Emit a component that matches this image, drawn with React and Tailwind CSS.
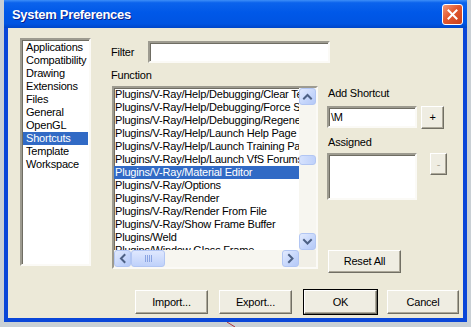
import React from "react";

const functions = [
  "Plugins/V-Ray/Help/Debugging/Clear Texture Cache",
  "Plugins/V-Ray/Help/Debugging/Force Scene Update",
  "Plugins/V-Ray/Help/Debugging/Regenerate Materials",
  "Plugins/V-Ray/Help/Launch Help Page",
  "Plugins/V-Ray/Help/Launch Training Page",
  "Plugins/V-Ray/Help/Launch VfS Forums",
  "Plugins/V-Ray/Material Editor",
  "Plugins/V-Ray/Options",
  "Plugins/V-Ray/Render",
  "Plugins/V-Ray/Render From File",
  "Plugins/V-Ray/Show Frame Buffer",
  "Plugins/Weld",
  "Plugins/Window Glass Frame",
];

const categories = [
  "Applications",
  "Compatibility",
  "Drawing",
  "Extensions",
  "Files",
  "General",
  "OpenGL",
  "Shortcuts",
  "Template",
  "Workspace",
];

const sunken =
  "border-2 border-t-[#9d9b90] border-l-[#9d9b90] border-b-[#fbfaf6] border-r-[#fbfaf6] shadow-[inset_1px_1px_0_#6f6d63] bg-white";

const raised =
  "border border-t-white border-l-white border-b-[#716f64] border-r-[#716f64] shadow-[inset_-1px_-1px_0_#aca899] bg-[#efede2]";

function Chevron({ dir }) {
  const paths = {
    up: "M4 9.5 L7.5 6 L11 9.5",
    down: "M4 6 L7.5 9.5 L11 6",
    left: "M9.5 4 L6 7.5 L9.5 11",
    right: "M6 4 L9.5 7.5 L6 11",
  };
  return (
    <svg width="15" height="15" viewBox="0 0 15 15">
      <path d={paths[dir]} fill="none" stroke="#4d6185" strokeWidth="2" strokeLinecap="square" />
    </svg>
  );
}

function ScrollBtn({ dir }) {
  return (
    <div className="w-[17px] h-[17px] shrink-0 flex items-center justify-center rounded-[3px] border border-[#b2c6f3] bg-[linear-gradient(135deg,#e3ebfe,#c4d5fb_60%,#b5c9f7)]">
      <Chevron dir={dir} />
    </div>
  );
}

function Button({ children, w = "w-[73px]", h = "h-[24px]", disabled = false }) {
  return (
    <div
      className={`${w} ${h} ${raised} flex items-center justify-center ${
        disabled ? "text-[#aca899]" : "text-black"
      }`}
    >
      {children}
    </div>
  );
}

export default function App() {
  return (
    <div
      className="w-[471px] h-[327px] bg-[#c9d0d5] overflow-hidden text-[11px] leading-[13px] tracking-[-0.2px] text-black"
      style={{ fontFamily: '"Liberation Sans", Arial, sans-serif' }}
    >
      <div className="ml-[4px] w-[463px] h-[322px] flex flex-col bg-[#0a46d8]">
        {/* Title bar */}
        <div className="h-[28px] shrink-0 flex items-center justify-between pl-[8px] pr-[4px] pt-[1px] bg-[linear-gradient(to_bottom,#3d8ef8_0%,#0b63ec_10%,#0058e8_45%,#0054e2_85%,#0046c8_100%)]">
          <span className="text-white font-bold text-[13px] tracking-[-0.3px] [text-shadow:1px_1px_0_#0a1f8a]">
            System Preferences
          </span>
          <div className="w-[21px] h-[21px] rounded-[3px] border border-white flex items-center justify-center bg-[linear-gradient(135deg,#f49a78,#e2582f_45%,#c9411c)]">
            <svg width="11" height="11" viewBox="0 0 11 11">
              <path d="M1.5 1.5 L9.5 9.5 M9.5 1.5 L1.5 9.5" stroke="white" strokeWidth="2" strokeLinecap="square" />
            </svg>
          </div>
        </div>

        {/* Body */}
        <div className="mx-[4px] mb-[4px] flex-1 min-h-0 bg-[#ece9d8] flex flex-col pl-[12px] pt-[10px]">
          <div className="h-[232px] shrink-0 flex items-start">
            {/* Category list */}
            <div className={`w-[71px] h-[228px] shrink-0 ${sunken} pt-[1px] px-[1px]`}>
              {categories.map((c) => (
                <div
                  key={c}
                  className={`h-[13px] pl-[3px] whitespace-nowrap ${
                    c === "Shortcuts" ? "bg-[#316ac5] text-white" : ""
                  }`}
                >
                  {c}
                </div>
              ))}
            </div>

            {/* Middle column */}
            <div className="ml-[20px] w-[207px] shrink-0 flex flex-col">
              <div className="mt-[3px] flex items-center">
                <span className="w-[37px] shrink-0">Filter</span>
                <div className={`w-[182px] h-[22px] shrink-0 ${sunken}`} />
              </div>
              <div className="mt-[6px] h-[13px]">Function</div>
              <div className={`mt-[4px] ml-[1px] w-[206px] h-[183px] ${sunken} flex flex-col`}>
                <div className="flex-1 flex min-h-0">
                  <div className="flex-1 overflow-hidden">
                    {functions.map((f) => (
                      <div
                        key={f}
                        className={`h-[13px] pl-[1px] whitespace-nowrap ${
                          f === "Plugins/V-Ray/Material Editor" ? "bg-[#316ac5] text-white" : ""
                        }`}
                      >
                        {f}
                      </div>
                    ))}
                  </div>
                  <div className="w-[17px] flex flex-col bg-[#f7f6f0]">
                    <ScrollBtn dir="up" />
                    <div className="h-[50px]" />
                    <div className="h-[10px] rounded-[3px] border border-[#b2c6f3] bg-[linear-gradient(to_right,#d6e2fd,#bfd1fa)]" />
                    <div className="flex-1" />
                    <ScrollBtn dir="down" />
                  </div>
                </div>
                <div className="h-[17px] shrink-0 flex">
                  <div className="flex-1 flex bg-[#f7f6f0]">
                    <ScrollBtn dir="left" />
                    <div className="w-[34px] h-[17px] rounded-[3px] border border-[#b2c6f3] bg-[linear-gradient(to_bottom,#dfe8fe,#bfd1fa)] flex items-center justify-center gap-[1px]">
                      <div className="w-[1px] h-[7px] bg-[#8aa4e2]" />
                      <div className="w-[1px] h-[7px] bg-[#8aa4e2]" />
                      <div className="w-[1px] h-[7px] bg-[#8aa4e2]" />
                      <div className="w-[1px] h-[7px] bg-[#8aa4e2]" />
                    </div>
                    <div className="flex-1" />
                    <ScrollBtn dir="right" />
                  </div>
                  <div className="w-[17px] bg-[#f1efe6]" />
                </div>
              </div>
            </div>

            {/* Right column */}
            <div className="ml-[9px] flex flex-col">
              <div className="mt-[49px] h-[13px] pl-[1px]">Add Shortcut</div>
              <div className="mt-[6px] flex items-start">
                <div className={`w-[90px] h-[22px] ${sunken} pl-[2px] flex items-center`}>
                  <span>\M</span>
                </div>
                <div className="ml-[4px]">
                  <Button w="w-[23px]" h="h-[23px]">+</Button>
                </div>
              </div>
              <div className="mt-[7px] h-[13px] pl-[1px]">Assigned</div>
              <div className="mt-[4px] flex items-start">
                <div className={`w-[90px] h-[47px] ${sunken}`} />
                <div className="ml-[13px]">
                  <Button w="w-[17px]" h="h-[22px]" disabled>
                    -
                  </Button>
                </div>
              </div>
              <div className="mt-[50px] ml-[1px]">
                <Button h="h-[23px]">Reset All</Button>
              </div>
            </div>
          </div>

          {/* Bottom buttons */}
          <div className="mt-[19px] flex items-center">
            <div className="ml-[115px]">
              <Button>Import...</Button>
            </div>
            <div className="ml-[11px]">
              <Button>Export...</Button>
            </div>
            <div className="ml-[11px] border border-black">
              <Button w="w-[73px]">OK</Button>
            </div>
            <div className="ml-[9px]">
              <Button w="w-[72px]">Cancel</Button>
            </div>
          </div>
        </div>
      </div>
      <div className="h-[5px] flex">
        <svg className="ml-[226px]" width="12" height="5" viewBox="0 0 12 5">
          <path d="M1 0 L9 5" stroke="#b0303a" strokeWidth="1" />
        </svg>
      </div>
    </div>
  );
}
